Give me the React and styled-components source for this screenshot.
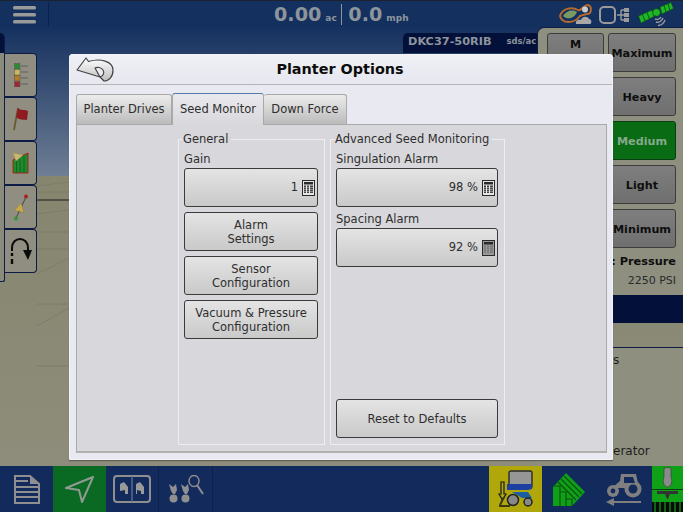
import React from "react";
import styled, {createGlobalStyle} from "styled-components";

const GlobalStyle = createGlobalStyle`
  html, body {
    margin: 0;
    padding: 0;
    background: #000;
  }
  * {
    box-sizing: border-box;
  }
`;

const Screen = styled.div`
  position: relative;
  width: 683px;
  height: 512px;
  overflow: hidden;
  display: flex;
  flex-direction: column;
  font-family: "DejaVu Sans", Verdana, sans-serif;
  color: #333;
`;

const TopBar = styled.div`
  height: 27px;
  flex: none;
  display: flex;
  align-items: center;
  padding: 1px 9px 0 13px;
  background: #14305f;
  border-top: 1px solid #1c2230;
`;

const MenuButton = styled.div`
  width: 36px;
  height: 25px;
  display: flex;
  align-items: center;
  border-right: 1px solid #0e2248;
  svg { display: block; }
`;

const Readouts = styled.div`
  flex: 1;
  display: flex;
  align-items: baseline;
  padding-left: 225px;
  color: #8d949c;
  font-weight: bold;
`;

const Value = styled.span`
  font-size: 19.2px;
  line-height: 24px;
`;

const Unit = styled.span`
  font-size: 9px;
  margin-left: 4px;
  width: ${p => p.$width}px;
`;

const ReadoutDivider = styled.span`
  width: 1px;
  height: 21px;
  background: #8d949c;
  margin: 0 6px 0 0;
  align-self: center;
`;

const StatusIcons = styled.div`
  display: flex;
  align-items: center;
  gap: 7px;
  svg { display: block; }
`;

const Workspace = styled.div`
  position: relative;
  flex: 1;
  min-height: 0;
  display: flex;
  background: linear-gradient(to bottom, #15315f 0, #6e7e94 149px, #86856e 149px, #8e8d7b 439px);
`;

const GroundLines = styled.svg`
  position: absolute;
  left: 0;
  top: 149px;
`;

const SideDock = styled.div`
  position: relative;
  display: flex;
  width: 37px;
  height: 249px;
  margin-top: 6px;
`;

const DockStrip = styled.div`
  width: 5px;
  height: 100%;
  background: linear-gradient(to bottom, #031038 0, #031038 20px, #8b8b7d 20px);
  border-right: 1px solid #0c1c44;
  border-bottom: 1px solid #0c1c44;
  border-radius: 0 6px 3px 0;
`;

const DockTabs = styled.div`
  width: 32px;
  padding-top: 20px;
  display: flex;
  flex-direction: column;
`;

const DockTab = styled.div`
  height: 44px;
  display: flex;
  align-items: center;
  justify-content: center;
  background: #8f8e80;
  border: 1px solid #0c1c44;
  border-left: none;
  border-radius: 0 4px 4px 0;
  svg { display: block; }
`;

const Spacer = styled.div`
  flex: 1;
`;

const SeedLabel = styled.div`
  width: 134px;
  height: 20px;
  margin-top: 6px;
  padding: 0 0 4px 5px;
  display: flex;
  align-items: center;
  gap: 15px;
  background: #03103a;
  border-radius: 5px 0 0 0;
  color: #8d949c;
  font-weight: bold;
  font-size: 11.3px;
  white-space: nowrap;
  small {
    font-size: 8.4px;
  }
`;

const RightColumn = styled.div`
  width: 146px;
  display: flex;
  flex-direction: column;
`;

const ControlPanel = styled.div`
  height: 268px;
  padding: 5px 7px 0 9px;
  background: #8f8f80;
  border-radius: 7px 0 0 0;
  border-top: 1px solid #0c1c44;
  border-left: 1px solid #0c1c44;
`;

const LoadGrid = styled.div`
  display: grid;
  grid-template-columns: 57px 68px;
  grid-auto-rows: 39px;
  column-gap: 4px;
  row-gap: 5px;
`;

const LoadButton = styled.div`
  grid-column: ${p => p.$col || 2};
  grid-row: ${p => p.$row};
  display: flex;
  align-items: ${p => (p.$top ? "flex-start" : "center")};
  justify-content: center;
  padding-top: ${p => (p.$top ? "4px" : "2px")};
  border: 1px solid ${p => (p.$active ? "#0b3d12" : "#3c3c3c")};
  border-radius: 3px;
  font-size: 11.2px;
  font-weight: bold;
  white-space: nowrap;
  color: ${p => (p.$active ? "#86a98c" : "#0e0e0e")};
  background: ${p => (p.$active ? "#096b14" : "linear-gradient(to bottom, #7e7e7e, #6f6f6f)")};
`;

const PressureBlock = styled.div`
  margin-top: 6px;
  text-align: right;
  color: #0e0e0e;
`;

const PressureTitle = styled.div`
  font-size: 11.3px;
  font-weight: bold;
  line-height: 16px;
  white-space: nowrap;
`;

const PressureValue = styled.div`
  font-size: 11px;
  line-height: 22px;
  color: #2a2a2a;
`;

const NavyBand = styled.div`
  height: 28px;
  background: #03103a;
`;

const MapGap = styled.div`
  height: 25px;
  border-bottom: 1px solid #0c1c44;
`;

const InfoPanel = styled.div`
  flex: 1;
  background: #8f8f80;
  color: #1e1e1e;
  font-size: 12px;
  display: flex;
  flex-direction: column;
  justify-content: space-between;
  padding: 5px 0 8px 76px;
`;

const BottomBar = styled.div`
  height: 46px;
  flex: none;
  display: flex;
  background: #132b5c;
`;

const NavCell = styled.div`
  width: ${p => p.$width || 53}px;
  flex: none;
  display: flex;
  align-items: center;
  justify-content: center;
  background: ${p => p.$bg || "transparent"};
  border-right: ${p => (p.$divided ? "1px solid #0e2248" : "none")};
  svg { display: block; }
`;

const Dialog = styled.div`
  position: absolute;
  left: 69px;
  top: 54px;
  width: 544px;
  height: 406px;
  display: flex;
  flex-direction: column;
  background: #e8e9f1;
  border: 1px solid #f4f4f8;
  border-radius: 3px 3px 0 0;
  box-shadow: 0 1px 1px rgba(40, 40, 40, 0.5);
`;

const TitleBar = styled.div`
  position: relative;
  height: 30px;
  flex: none;
  display: flex;
  align-items: center;
  justify-content: center;
  padding: 0 2px 2px 0;
  background: linear-gradient(to bottom, #f0f1f6, #e6e7ef);
  border-bottom: 1px solid #b4b4b4;
  color: #0c0c0c;
  font-size: 14.4px;
  font-weight: bold;
`;

const BackButton = styled.div`
  position: absolute;
  left: 6px;
  top: 2px;
  svg { display: block; }
`;

const DialogBody = styled.div`
  flex: 1;
  min-height: 0;
  display: flex;
  flex-direction: column;
  padding: 7px 5px 6px 6px;
`;

const TabRow = styled.div`
  height: 32px;
  flex: none;
  display: flex;
  align-items: flex-end;
`;

const Tab = styled.div`
  height: ${p => (p.$active ? "32px" : "30px")};
  width: ${p => p.$width}px;
  display: flex;
  align-items: center;
  justify-content: center;
  padding-bottom: 2px;
  font-size: 11.5px;
  color: #2e2e2e;
  border: 1px solid #a9a9a9;
  border-left: ${p => (p.$active ? "1px solid #a9a9a9" : "none")};
  border-bottom: none;
  border-top: 1px solid ${p => (p.$active ? "#4f7ba6" : "#a9a9a9")};
  border-radius: 3px 3px 0 0;
  background: ${p => (p.$active
    ? "linear-gradient(to bottom, #e9e9ee, #d8d8dc)"
    : "linear-gradient(to bottom, #ececec, #bbbbbb)")};
  margin-bottom: ${p => (p.$active ? "-1px" : "0")};
  position: relative;
  &:first-child {
    border-left: 1px solid #a9a9a9;
  }
`;

const TabPane = styled.div`
  flex: 1;
  min-height: 0;
  display: flex;
  gap: 5px;
  padding: 8px 0 6px 101px;
  background: #d8d8dc;
  border: 1px solid #a9a9a9;
  border-bottom: 2px solid #b0b0b0;
`;

const Group = styled.fieldset`
  width: ${p => p.$width}px;
  margin: 0;
  padding: 0 6px 0 5px;
  min-width: 0;
  display: flex;
  flex-direction: column;
  border: 1px solid #eeeef2;
`;

const GroupTitle = styled.legend`
  padding: 0 3px 0 0;
  margin-left: -1px;
  font-size: 11.5px;
  line-height: 13px;
  color: #2e2e2e;
`;

const FieldLabel = styled.div`
  font-size: 11.5px;
  line-height: 15px;
  margin: ${p => p.$top ?? 6}px 0 1px;
  color: #2e2e2e;
`;

const ActionButton = styled.div`
  height: 39px;
  flex: none;
  display: flex;
  align-items: center;
  justify-content: ${p => (p.$value ? "flex-end" : "center")};
  gap: 4px;
  padding: ${p => (p.$value ? "0 2px 0 0" : "2px 2px 0")};
  margin-bottom: ${p => p.$gap || 0}px;
  margin-top: ${p => (p.$pushed ? "auto" : "0")};
  text-align: center;
  font-size: 11.5px;
  line-height: 13.5px;
  color: #2e2e2e;
  border: 1px solid #3a3a3a;
  border-radius: 3px;
  background: linear-gradient(to bottom, #e4e4e4, #c9c9c9);
  svg { display: block; flex: none; }
`;

const Calculator = ({dim}) => (
  <svg width="13" height="16" viewBox="0 0 13 16">
    <rect x="0.5" y="0.5" width="12" height="15" fill={dim ? "#9a9a9a" : "#e6e6e6"} stroke="#2a2a2a" />
    <rect x="2" y="2" width="9" height="2.5" fill="#2a2a2a" />
    {[5.5, 7.5, 9.5, 11.5].map(y => (
      <g key={y} fill={dim ? "#777" : "#333"}>
        <rect x="2" y={y} width="2" height="1.4" />
        <rect x="5" y={y} width="2" height="1.4" />
        <rect x="8" y={y} width="3" height="1.4" />
      </g>
    ))}
  </svg>
);

const BackArrow = () => (
  <svg width="38" height="26" viewBox="0 0 38 26">
    <defs>
      <linearGradient id="back" x1="0" y1="0" x2="0" y2="1">
        <stop offset="0" stopColor="#ffffff" />
        <stop offset="1" stopColor="#bdbdbd" />
      </linearGradient>
    </defs>
    <path d="M1 13 L10 1 L12.5 4.5 C24 1 37 4 37 13 C37 20 33 24 28 24 L24 20 C27 19 29 16 27 13 C25 10 21 10 19 11 L24 20 Z" fill="url(#back)" stroke="#444" strokeWidth="1.2" strokeLinejoin="round" />
  </svg>
);

const MenuIcon = () => (
  <svg width="23" height="18" viewBox="0 0 23 18">
    <g fill="#9a9a9a">
      <rect y="0" width="23" height="3.4" rx="1.5" />
      <rect y="7" width="23" height="3.4" rx="1.5" />
      <rect y="14" width="23" height="3.4" rx="1.5" />
    </g>
  </svg>
);

const WeatherIcon = () => (
  <svg width="33" height="21" viewBox="0 0 33 21">
    <path d="M1 12 C3 5 12 2 19 6 C22 8 24 1 29 1 C33 2 33 10 28 10 C24 11 23 11 21 12 C15 20 3 20 1 12 Z" fill="none" stroke="#b5692e" strokeWidth="2" />
    <path d="M4 12 C7 7 13 5 18 8 C15 15 8 16 4 12 Z" fill="#7a9a62" />
    <circle cx="26" cy="5.5" r="3" fill="#c8ccd0" />
    <path d="M17 20 C16 16 20 15 22 16 C23 12 29 12 30 15 C33 15 33 20 31 20 Z" fill="#a8a8a8" />
  </svg>
);

const DisplayIcon = () => (
  <svg width="32" height="18" viewBox="0 0 32 18">
    <rect x="1" y="1" width="15" height="16" rx="4" fill="none" stroke="#9a9a9a" strokeWidth="2" />
    <g stroke="#9a9a9a" strokeWidth="1.4" fill="none">
      <path d="M18 9 H22 M22 4 V14 M22 4 H25 M22 9 H25 M22 14 H25" />
    </g>
    <g fill="#9a9a9a">
      <rect x="25" y="2" width="5" height="4" />
      <rect x="25" y="7" width="5" height="4" />
      <rect x="25" y="12" width="5" height="4" />
    </g>
  </svg>
);

const SatelliteIcon = () => (
  <svg width="36" height="26" viewBox="0 0 36 26">
    <g fill="#1eb526" stroke="#0d4a12" strokeWidth="0.6">
      <path d="M0.5 14 L14 8 L16 14.5 L3 21 Z" />
      <path d="M22 5 L33 0.5 L35.5 6.5 L24 12 Z" />
      <circle cx="18.5" cy="10.5" r="3.8" />
    </g>
    <g stroke="#0d4a12" strokeWidth="0.9">
      <path d="M4.5 12.5 L7 19 M9 10.5 L11.5 17 M26 3.5 L28 10 M30 2 L32 8.5" />
    </g>
    <g fill="none" stroke="#9a9a9a" strokeWidth="1.4">
      <path d="M17 17 C19 18 22 17 23 15" />
      <path d="M18 20 C21 21 24 19 25 16" />
      <path d="M20 23.5 C23 23.5 26 21 27 18" />
    </g>
  </svg>
);

const StatusListIcon = () => (
  <svg width="14" height="24" viewBox="0 0 14 24">
    <rect x="0.5" y="0.5" width="5.5" height="5.5" fill="#2f8a38" stroke="#555" strokeWidth="0.5" />
    <rect x="0.5" y="6.5" width="5.5" height="5.5" fill="#c8b860" stroke="#555" strokeWidth="0.5" />
    <rect x="0.5" y="12.5" width="5.5" height="5.5" fill="#b57a26" stroke="#555" strokeWidth="0.5" />
    <rect x="0.5" y="18.5" width="5.5" height="5.5" fill="#9c2a34" stroke="#555" strokeWidth="0.5" />
    <g stroke="#555" strokeWidth="0.8">
      <path d="M7 3 H14 M7 9 H14 M7 15 H14 M7 21 H14" />
    </g>
  </svg>
);

const FlagIcon = () => (
  <svg width="16" height="24" viewBox="0 0 16 24">
    <path d="M5 1 L1 23" stroke="#6a5a30" strokeWidth="1.8" />
    <path d="M5 1 C8 4 11 2 15 4 L14 13 C10 12 7 14 3 10 Z" fill="#8f1a20" />
  </svg>
);

const YieldIcon = () => (
  <svg width="17" height="22" viewBox="0 0 17 22">
    <path d="M1 21 V8 L16 1 V21 Z" fill="#1f8a2c" stroke="#a82020" strokeWidth="1" />
    <g stroke="#0c5a18" strokeWidth="0.8">
      <path d="M4.5 8 V21 M8 7 V21 M12 4 V21" />
    </g>
    <path d="M1 1 L11 3 L4 9 Z" fill="#c9b878" stroke="#a89040" strokeWidth="0.6" />
  </svg>
);

const GuidanceIcon = () => (
  <svg width="16" height="27" viewBox="0 0 16 27">
    <path d="M3 24 L13 3" stroke="#444" strokeWidth="1" />
    <circle cx="13" cy="2.5" r="2" fill="#a82020" />
    <circle cx="3" cy="24.5" r="2" fill="#2f9a38" />
    <path d="M8 9 L11 19 L6 17 L1 17 Z" fill="#c9a94c" stroke="#8a7a40" strokeWidth="0.5" />
  </svg>
);

const UTurnIcon = () => (
  <svg width="22" height="27" viewBox="0 0 22 27">
    <path d="M2 13 V10 C2 -2 18 -2 18 10 V13" fill="none" stroke="#0a0a0a" strokeWidth="2" />
    <path d="M13 12 H22 L18 22 Z" fill="#0a0a0a" />
    <path d="M2 15 V18 M2 21 V26" stroke="#0a0a0a" strokeWidth="2.4" />
  </svg>
);

const ReportIcon = () => (
  <svg width="26" height="29" viewBox="0 0 26 29">
    <path d="M1 1 H16 L25 9 V28 H1 Z" fill="none" stroke="#8f8f8f" strokeWidth="2" />
    <path d="M16 1 L25 9 H16 Z" fill="#8f8f8f" />
    <path d="M1 6 H14 M1 12 H25 M1 17 H25 M1 22 H25" stroke="#8f8f8f" strokeWidth="2" />
  </svg>
);

const NavArrowIcon = () => (
  <svg width="31" height="29" viewBox="0 0 31 29">
    <path d="M29 2 L2 13 L15 15 L18 27 Z" fill="none" stroke="#8f9a90" strokeWidth="2" strokeLinejoin="round" />
  </svg>
);

const SplitMapIcon = () => (
  <svg width="38" height="28" viewBox="0 0 38 28">
    <rect x="1" y="1" width="36" height="26" rx="3" fill="none" stroke="#8f8f8f" strokeWidth="2" />
    <path d="M19 1 V27" stroke="#5f6f8a" strokeWidth="1.4" />
    <path d="M7 9 L11 7 L15 12 V19 H7 Z M23 9 L27 7 L31 12 V19 H23 Z" fill="#9a9a9a" />
    <path d="M7 16 L12 15 V19 H7 Z M24 15 L28 16 V19 H24 Z" fill="#0f2a58" />
  </svg>
);

const PlantSearchIcon = () => (
  <svg width="36" height="28" viewBox="0 0 36 28">
    <g fill="#8f8f8f">
      <path d="M1 9 L5 12 L8 9 L9 15 L7 19 L5 19 L3 16 Z" />
      <circle cx="5.5" cy="23.5" r="4" />
      <path d="M13 9 L17 12 L20 9 L21 15 L19 19 L17 19 L15 16 Z" />
      <circle cx="17.5" cy="23.5" r="4" />
    </g>
    <ellipse cx="26" cy="6" rx="5" ry="5.5" fill="none" stroke="#8f8f8f" strokeWidth="1.4" />
    <path d="M29 10 L35 19" stroke="#8f8f8f" strokeWidth="2" />
  </svg>
);

const PlanterIcon = () => (
  <svg width="36" height="38" viewBox="0 0 36 38">
    <rect x="11" y="1" width="23" height="17" rx="2" fill="#969696" stroke="#2a2a2a" strokeWidth="1.4" />
    <path d="M9 14 H34 V19 L30 20 H9 Z" fill="#1c3fa0" />
    <path d="M14 22 H30 L34 28 H24 Z" fill="#1c5fa0" />
    <path d="M3 12 H6 V24 H8 L4.5 30 L1 24 H3 Z" fill="none" stroke="#1a1a1a" strokeWidth="1.2" />
    <path d="M2 35 L6 27 M1 36 H12" stroke="#3a3a12" strokeWidth="2" />
    <circle cx="15" cy="30" r="5.5" fill="#888" stroke="#222" strokeWidth="1.5" />
    <circle cx="30" cy="32" r="4" fill="#888" stroke="#222" strokeWidth="1.5" />
  </svg>
);

const FieldIcon = () => (
  <svg width="34" height="35" viewBox="0 0 34 35">
    <path d="M1 15 L14 1 L33 20 L20 34 H1 Z" fill="#10a018" />
    <g stroke="#08500e" strokeWidth="1.1" fill="none">
      <path d="M9 7 L27 25 M6 10 L24 28 M12 4 L30 22 M1 14 H8 V34 M8 20 H14 V34 M14 27 H20 V34" />
    </g>
  </svg>
);

const TractorIcon = () => (
  <svg width="36" height="33" viewBox="0 0 36 33">
    <g fill="#7f7f7f">
      <path d="M15 1 H30 L33 15 H6 L14 8 Z" />
      <circle cx="7" cy="18" r="6" />
      <circle cx="27" cy="16" r="8.5" />
    </g>
    <circle cx="7" cy="18" r="2.4" fill="#132b5c" />
    <circle cx="27" cy="16" r="4.5" fill="#132b5c" />
    <path d="M18 4 H27 L29 10 H18 Z" fill="#132b5c" />
    <path d="M3 29 H35" stroke="#7f7f7f" strokeWidth="2" />
    <path d="M0 29 L8 25 V33 Z" fill="#7f7f7f" />
  </svg>
);

const RowUnitIcon = () => (
  <svg width="31" height="46" viewBox="0 0 31 46">
    <rect width="31" height="46" fill="#10a018" />
    <path d="M0 23.5 H31" stroke="#0a3a10" strokeWidth="1" />
    <path d="M12 3 C12 1 19 1 19 3 V11 C21 15 19 21 15.5 21 C12 21 10 15 12 11 Z" fill="#8a8a8a" stroke="#333" strokeWidth="0.6" />
    <path d="M5 25 H26 V28 H18 L16 33 H15 L13 28 H5 Z" fill="#333" />
    <rect y="36" width="31" height="10" fill="#0a0a0a" />
    <path d="M3 36 V46 M8 36 V46 M13 36 V46 M18 36 V46 M23 36 V46 M28 36 V46" stroke="#10a018" strokeWidth="1.2" />
  </svg>
);

const App = () => (
  <>
    <GlobalStyle />
    <Screen>
      <TopBar>
        <MenuButton><MenuIcon /></MenuButton>
        <Readouts>
          <Value>0.00</Value>
          <Unit $width={16}>ac</Unit>
          <ReadoutDivider />
          <Value>0.0</Value>
          <Unit $width={24}>mph</Unit>
        </Readouts>
        <StatusIcons>
          <WeatherIcon />
          <DisplayIcon />
          <SatelliteIcon />
        </StatusIcons>
      </TopBar>
      <Workspace>
        <GroundLines width="683" height="290" viewBox="0 0 683 290">
          <g stroke="#7b7a66" strokeWidth="0.8" fill="none">
            <path d="M37 10 L69 6 M37 16 H69 M37 38 L69 34 M37 56 H69 M37 73 H69 M37 98 L69 82 M37 128 H69 M37 150 L69 132 M37 190 H69" />
          </g>
          <path d="M37 24 H69" stroke="#1c1c1c" strokeWidth="1" />
        </GroundLines>
        <SideDock>
          <DockStrip />
          <DockTabs>
            <DockTab><StatusListIcon /></DockTab>
            <DockTab><FlagIcon /></DockTab>
            <DockTab><YieldIcon /></DockTab>
            <DockTab><GuidanceIcon /></DockTab>
            <DockTab><UTurnIcon /></DockTab>
          </DockTabs>
        </SideDock>
        <Spacer />
        <SeedLabel>DKC37-50RIB <small>sds/ac</small></SeedLabel>
        <RightColumn>
          <ControlPanel>
            <LoadGrid>
              <LoadButton $col={1} $row={1} $top>M</LoadButton>
              <LoadButton $row={1}>Maximum</LoadButton>
              <LoadButton $row={2}>Heavy</LoadButton>
              <LoadButton $row={3} $active>Medium</LoadButton>
              <LoadButton $row={4}>Light</LoadButton>
              <LoadButton $row={5}>Minimum</LoadButton>
            </LoadGrid>
            <PressureBlock>
              <PressureTitle>: Pressure</PressureTitle>
              <PressureValue>2250 PSI</PressureValue>
            </PressureBlock>
          </ControlPanel>
          <NavyBand />
          <MapGap />
          <InfoPanel>
            <span>s</span>
            <span>erator</span>
          </InfoPanel>
        </RightColumn>
      </Workspace>
      <BottomBar>
        <NavCell><ReportIcon /></NavCell>
        <NavCell $bg="#0a6a24"><NavArrowIcon /></NavCell>
        <NavCell $divided><SplitMapIcon /></NavCell>
        <NavCell $divided $width={54}><PlantSearchIcon /></NavCell>
        <Spacer />
        <NavCell $bg="#b0a80a"><PlanterIcon /></NavCell>
        <NavCell $width={54}><FieldIcon /></NavCell>
        <NavCell $width={56}><TractorIcon /></NavCell>
        <NavCell $width={31}><RowUnitIcon /></NavCell>
      </BottomBar>
      <Dialog>
        <TitleBar>
          <BackButton><BackArrow /></BackButton>
          Planter Options
        </TitleBar>
        <DialogBody>
          <TabRow>
            <Tab $width={96}>Planter Drives</Tab>
            <Tab $width={92} $active>Seed Monitor</Tab>
            <Tab $width={83}>Down Force</Tab>
          </TabRow>
          <TabPane>
            <Group $width={147}>
              <GroupTitle>General</GroupTitle>
              <FieldLabel>Gain</FieldLabel>
              <ActionButton $value $gap={5}>1 <Calculator /></ActionButton>
              <ActionButton $gap={5}>Alarm<br />Settings</ActionButton>
              <ActionButton $gap={5}>Sensor<br />Configuration</ActionButton>
              <ActionButton>Vacuum &amp; Pressure<br />Configuration</ActionButton>
            </Group>
            <Group $width={175}>
              <GroupTitle>Advanced Seed Monitoring</GroupTitle>
              <FieldLabel>Singulation Alarm</FieldLabel>
              <ActionButton $value>98 % <Calculator /></ActionButton>
              <FieldLabel $top={5}>Spacing Alarm</FieldLabel>
              <ActionButton $value>92 % <Calculator dim /></ActionButton>
              <ActionButton $pushed $gap={6}>Reset to Defaults</ActionButton>
            </Group>
          </TabPane>
        </DialogBody>
      </Dialog>
    </Screen>
  </>
);

export default App;
